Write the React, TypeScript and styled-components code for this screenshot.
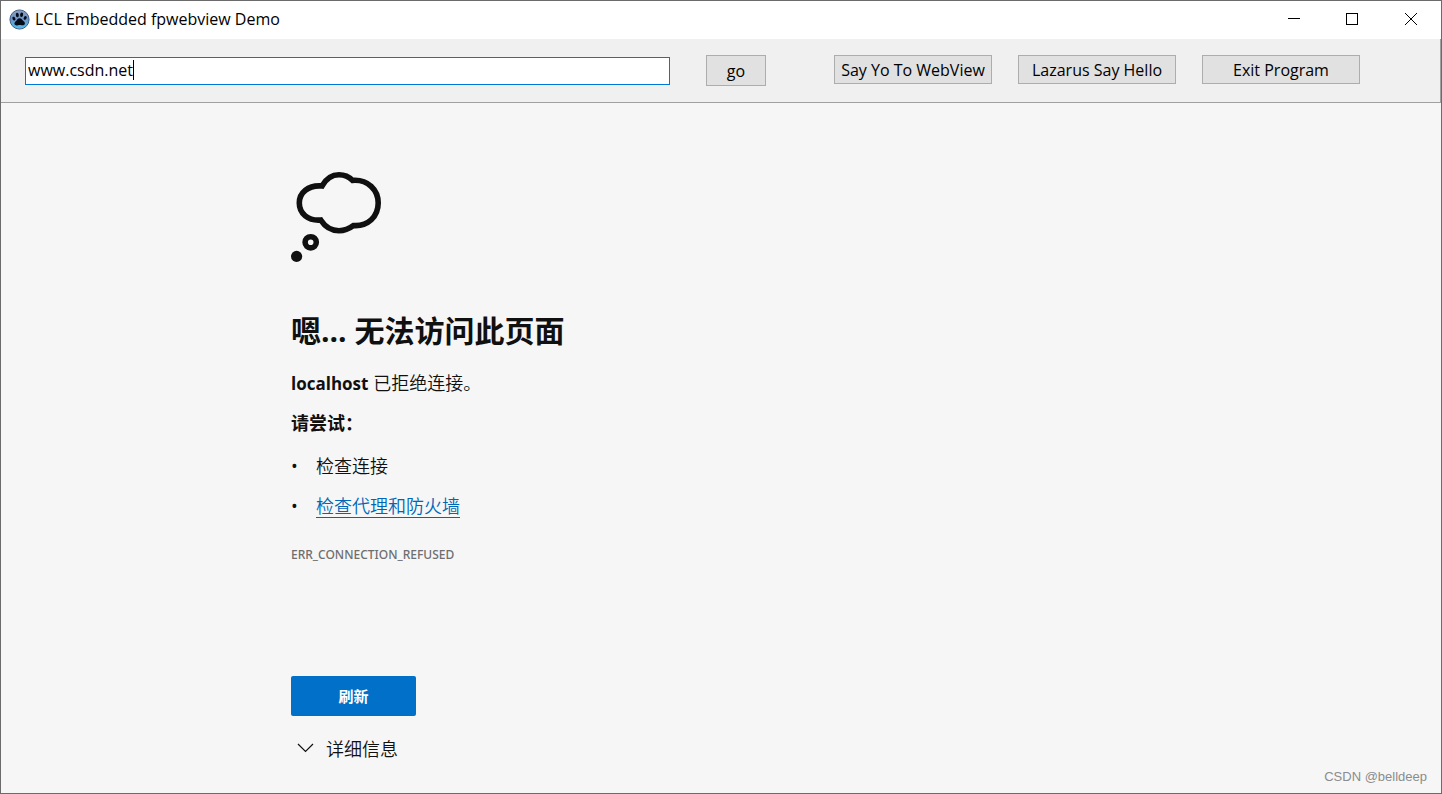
import React, { useState } from "react";
import styled, { createGlobalStyle } from "styled-components";

const GlobalStyle = createGlobalStyle`
  *, *::before, *::after {
    box-sizing: border-box;
  }
  body {
    margin: 0;
    background: #f6f6f6;
    color: #101010;
    font-family: "Open Sans", "Noto Sans CJK SC", sans-serif;
  }
`;

const Frame = styled.div`
  display: flex;
  flex-direction: column;
  min-height: 100vh;
  border: 1px solid #6b6b6b;
`;

const TitleBar = styled.header`
  display: flex;
  align-items: center;
  height: 38px;
  padding: 0 0 2px 8px;
  background: #fff;
  color: #000;
`;

const Title = styled.h1`
  flex: 1;
  margin: 0 0 0 5px;
  font-size: 16px;
  font-weight: 400;
  line-height: 22px;
`;

const CaptionButton = styled.button`
  display: flex;
  align-items: center;
  justify-content: center;
  width: 58px;
  height: 36px;
  padding: 0;
  border: 0;
  background: transparent;
`;

const CaptionButtons = styled.div`
  display: flex;
  padding-right: 2px;
`;

const Toolbar = styled.form`
  display: flex;
  align-items: flex-start;
  height: 64px;
  padding: 16px 0 0 24px;
  border-right: 1px solid #a0a0a0;
  border-bottom: 1px solid #a0a0a0;
  background: #f0f0f0;
`;

const AddressBox = styled.div`
  position: relative;
  flex: 0 1 645px;
  margin: 2px 36px 0 0;
`;

const AddressInput = styled.input`
  display: block;
  width: 100%;
  height: 28px;
  padding: 0 2px 2px;
  border: 1px solid #0078d7;
  border-radius: 0;
  outline: 0;
  background: #fff;
  color: #000;
  font: 400 16px/22px "Open Sans", "Noto Sans CJK SC", sans-serif;
`;

const ToolButton = styled.button<{ $compact?: boolean }>`
  flex: none;
  width: ${(p) => (p.$compact ? 60 : 158)}px;
  height: ${(p) => (p.$compact ? 31 : 29)}px;
  padding: 0;
  border: 1px solid #adadad;
  background: #e1e1e1;
  color: #000;
  font: 400 16px/22px "Open Sans", "Noto Sans CJK SC", sans-serif;
`;

const ActionGroup = styled.div`
  display: flex;
  gap: 26px;
  margin-left: 68px;
`;

const Page = styled.main`
  flex: 1;
  width: 100%;
  max-width: 860px;
  margin: 0 auto;
  padding-top: 68px;
`;

const Heading = styled.h2`
  margin: 44px 0 0;
  font-size: 30px;
  font-weight: 700;
  line-height: 48px;
`;

const Text = styled.p`
  margin: 16px 0 0;
  font-size: 18px;
  font-weight: 350;
  line-height: 24px;

  strong {
    font-weight: 700;
  }
`;

const Host = styled.strong`
  font-size: 17px;
  line-height: 1;
`;

const Tips = styled.ul`
  margin: 19px 0 0;
  padding: 0;
  list-style: none;
`;

const Tip = styled.li`
  display: flex;
  margin-top: 16px;
  font-size: 18px;
  font-weight: 350;
  line-height: 24px;

  &::before {
    content: "•";
    width: 25px;
    font-weight: 400;
  }
`;

const TipLink = styled.a`
  height: 24px;
  border-bottom: 1px solid #0067b8;
  color: #0067b8;
  text-decoration: none;
`;

const ErrorCode = styled.p`
  margin: 29px 0 0;
  color: #6e6e6e;
  font: 500 12px/16px "Noto Sans", sans-serif;
`;

const RefreshButton = styled.button`
  display: block;
  width: 125px;
  height: 40px;
  margin-top: 113px;
  border: 0;
  border-radius: 2px;
  background: #0070c9;
  color: #fff;
  font: 700 15px/20px "Noto Sans CJK SC", sans-serif;
`;

const DetailsButton = styled.button`
  display: flex;
  align-items: center;
  gap: 12px;
  margin-top: 20px;
  padding: 0 0 0 6px;
  border: 0;
  background: transparent;
  color: #101010;
  font: 350 18px/24px "Noto Sans CJK SC", sans-serif;
`;

const Watermark = styled.footer`
  position: absolute;
  right: 15px;
  bottom: 8px;
  color: #8c8c8c;
  font: 400 13px/18px "Liberation Sans", sans-serif;
`;

const PawLogo = () => (
  <svg width="21" height="21" viewBox="0 0 21 21" aria-hidden="true">
    <defs>
      <linearGradient id="ball" x1="0" y1="0" x2="0" y2="1">
        <stop offset="0" stopColor="#8f9cbc" />
        <stop offset="0.5" stopColor="#6a95c6" />
        <stop offset="1" stopColor="#4fc0f5" />
      </linearGradient>
    </defs>
    <circle cx="10.5" cy="10.5" r="9.6" fill="url(#ball)" stroke="#34547e" strokeWidth="0.9" />
    <g fill="#050b18">
      <ellipse cx="8.3" cy="6" rx="1.5" ry="2.3" transform="rotate(-8 8.3 6)" />
      <ellipse cx="12.6" cy="5.7" rx="1.5" ry="2.3" transform="rotate(10 12.6 5.7)" />
      <ellipse cx="4.9" cy="9.6" rx="1.4" ry="2" transform="rotate(-28 4.9 9.6)" />
      <ellipse cx="16.2" cy="8.9" rx="1.4" ry="2" transform="rotate(28 16.2 8.9)" />
      <path d="M10.6 9.2c2 0 2.6 1.7 3.8 2.9 1.2 1.1 1.8 1.7 1.4 2.9-.5 1.5-2 1.5-3.2 1.2-1.3-.3-2.5-.3-3.8.1-1.3.4-2.9.2-3.3-1.2-.3-1.1.4-1.9 1.5-3 1.1-1.2 1.7-2.9 3.6-2.9z" />
    </g>
  </svg>
);

const CloudSvg = styled.svg`
  display: block;
`;

const ThoughtCloud = () => (
  <CloudSvg width="92" height="92" viewBox="0 0 92 92" fill="none" stroke="#101010" aria-hidden="true">
    <path
      strokeWidth="5.6"
      d="M31 15C35 8 40.5 3.8 48 3.8C53.500 3.8 58 5.8 61.5 9.4C77 8.2 87.2 19 87.2 32C87.2 45.5 77 55.5 62.5 54.5C58.5 57.5 54 59.7 48 59.7C40 59.7 34 55.7 29.7 49C17 50 8.3 42.5 8.3 32C8.3 22 17 13.8 31 15Z"
    />
    <circle cx="19.7" cy="71.3" r="5.6" strokeWidth="5.6" />
    <circle cx="5.6" cy="85.4" r="5.6" fill="#101010" stroke="none" />
  </CloudSvg>
);

const Caret = styled.span`
  position: absolute;
  top: 3px;
  left: 108px;
  width: 1px;
  height: 20px;
  background: #000;
`;

export default function App() {
  const [address, setAddress] = useState("www.csdn.net");
  return (
    <Frame>
      <GlobalStyle />
      <TitleBar>
        <PawLogo />
        <Title>LCL Embedded fpwebview Demo</Title>
        <CaptionButtons>
          <CaptionButton aria-label="Minimize">
            <svg width="12" height="12" stroke="#000" aria-hidden="true">
              <path d="M0 5.5H12" />
            </svg>
          </CaptionButton>
          <CaptionButton aria-label="Maximize">
            <svg width="12" height="12" stroke="#000" fill="none" aria-hidden="true">
              <rect x="0.5" y="0.5" width="11" height="11" />
            </svg>
          </CaptionButton>
          <CaptionButton aria-label="Close">
            <svg width="12" height="12" viewBox="-1 0 12 12" stroke="#000" overflow="visible" aria-hidden="true">
              <path d="M0 0L12 12M12 0L0 12" />
            </svg>
          </CaptionButton>
        </CaptionButtons>
      </TitleBar>
      <Toolbar onSubmit={(e) => e.preventDefault()}>
        <AddressBox>
          <AddressInput
            aria-label="Address"
            value={address}
            onChange={(e) => setAddress(e.target.value)}
          />
          <Caret />
        </AddressBox>
        <ToolButton type="submit" $compact>go</ToolButton>
        <ActionGroup>
          <ToolButton type="button">Say Yo To WebView</ToolButton>
          <ToolButton type="button">Lazarus Say Hello</ToolButton>
          <ToolButton type="button">Exit Program</ToolButton>
        </ActionGroup>
      </Toolbar>
      <Page lang="zh-CN">
        <ThoughtCloud />
        <Heading>嗯... 无法访问此页面</Heading>
        <Text>
          <Host>localhost</Host> 已拒绝连接。
        </Text>
        <Text>
          <strong>请尝试：</strong>
        </Text>
        <Tips>
          <Tip>检查连接</Tip>
          <Tip>
            <TipLink href="#proxy">检查代理和防火墙</TipLink>
          </Tip>
        </Tips>
        <ErrorCode>ERR_CONNECTION_REFUSED</ErrorCode>
        <RefreshButton type="button">刷新</RefreshButton>
        <DetailsButton type="button">
          <svg width="17" height="10" fill="none" stroke="#101010" strokeWidth="1.2" aria-hidden="true">
            <path d="M1 1L8.5 8.5L16 1" />
          </svg>
          详细信息
        </DetailsButton>
      </Page>
      <Watermark>CSDN @belldeep</Watermark>
    </Frame>
  );
}
